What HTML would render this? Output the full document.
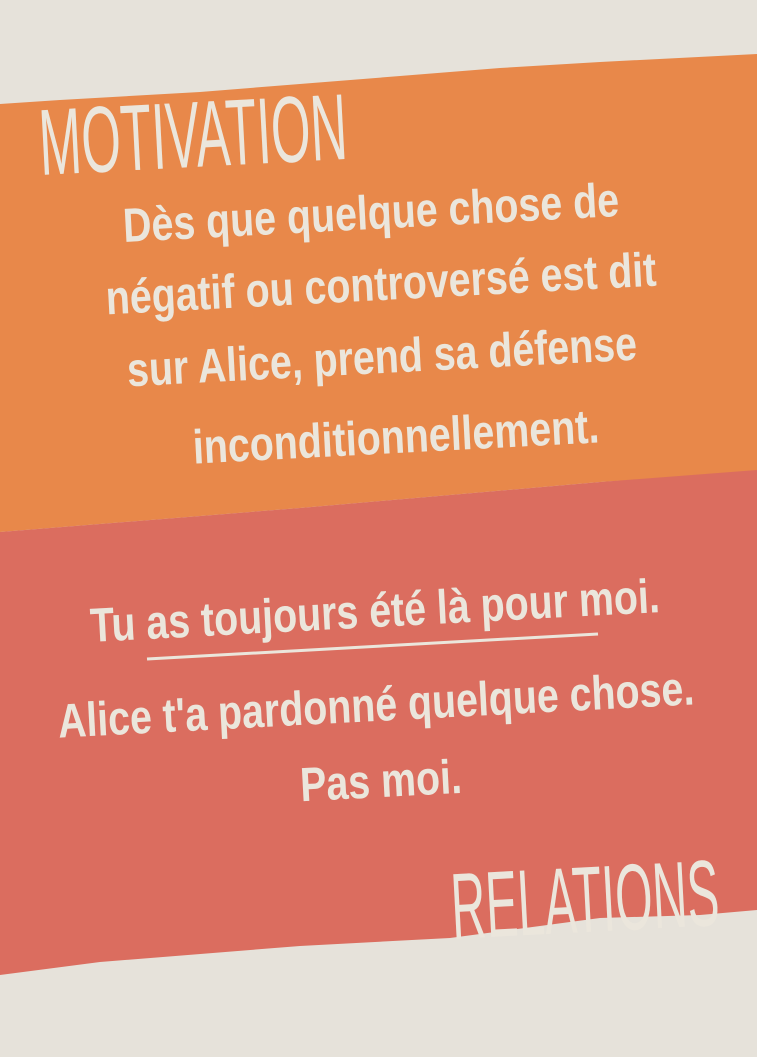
<!DOCTYPE html>
<html><head><meta charset="utf-8"><style>
html,body{margin:0;padding:0}
body{width:757px;height:1057px;background:#e6e2da;position:relative;overflow:hidden;font-family:"Liberation Sans",sans-serif;color:#ebe6dc}
svg{position:absolute;left:0;top:0}
.t{position:absolute;white-space:nowrap;transform-origin:center;text-align:center;width:1000px}
.big{font-size:94px;line-height:1;transform:rotate(-3deg) scaleX(0.54);}
.body{font-weight:bold;font-size:48px;line-height:1;transform:rotate(-3deg) scaleX(0.82);}
</style></head><body>
<svg width="757" height="1057">
<polygon fill="#e8884a" points="0,104 60,100 200,92 400,76 500,68 600,62 757,54 757,472 600,482 300,508 0,532"/>
<polygon fill="#db6d5f" points="0,532 300,508 600,482 757,470 757,910 700,915 600,918 450,938 300,946 100,962 0,975"/>
<line x1="147" y1="659" x2="598" y2="634" stroke="#ebe6dc" stroke-width="3"/>
</svg>
<div class="t big" style="left:-307px;top:88px">MOTIVATION</div>
<div class="t body" style="left:-129px;top:190px">Dès que quelque chose de</div>
<div class="t body" style="left:-119px;top:261px">négatif ou controversé est dit</div>
<div class="t body" style="left:-118px;top:334px">sur Alice, prend sa défense</div>
<div class="t body" style="left:-104px;top:414px">inconditionnellement.</div>
<div class="t body" style="left:-125px;top:588px">Tu as toujours été là pour moi.</div>
<div class="t body" style="left:-124px;top:682px">Alice t'a pardonné quelque chose.</div>
<div class="t body" style="left:-119px;top:758px">Pas moi.</div>
<div class="t big" style="left:85px;top:853px;transform:rotate(-3deg) scaleX(0.51)">RELATIONS</div>
</body></html>
